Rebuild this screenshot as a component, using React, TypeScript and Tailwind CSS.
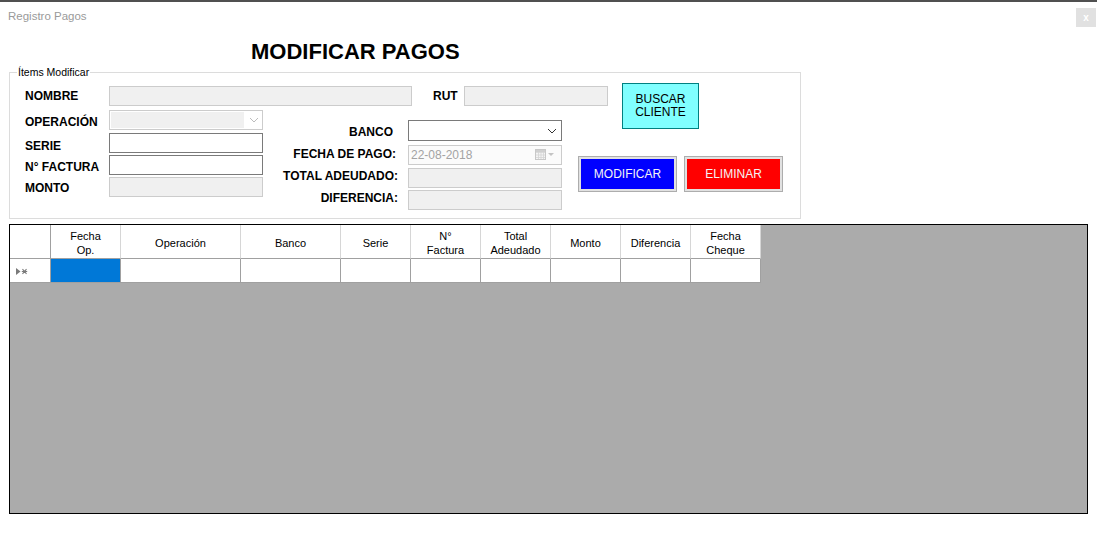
import React from "react";

const font = { fontFamily: '"Liberation Sans", Arial, sans-serif' };

const cols = [
  { label: ["Fecha", "Op."], w: "w-[70px]" },
  { label: ["Operación"], w: "w-[120px]" },
  { label: ["Banco"], w: "w-[100px]" },
  { label: ["Serie"], w: "w-[70px]" },
  { label: ["N°", "Factura"], w: "w-[70px]" },
  { label: ["Total", "Adeudado"], w: "w-[70px]" },
  { label: ["Monto"], w: "w-[70px]" },
  { label: ["Diferencia"], w: "w-[70px]" },
  { label: ["Fecha", "Cheque"], w: "w-[70px]" },
];

function Chevron({ color }: { color: string }) {
  return (
    <svg width="10" height="6" viewBox="0 0 10 6" fill="none">
      <path d="M1 1 L5 5 L9 1" stroke={color} strokeWidth="1" />
    </svg>
  );
}

function Label({ text, className = "" }: { text: string; className?: string }) {
  return (
    <span className={`text-[12px] font-bold leading-[14px] text-black whitespace-nowrap ${className}`}>
      {text}
    </span>
  );
}

function TextBox({ w, disabled }: { w: string; disabled?: boolean }) {
  return disabled ? (
    <div className={`${w} h-[20px] border border-[#cccccc] bg-[#f0f0f0]`} />
  ) : (
    <div className={`${w} h-[20px] border border-[#7a7a7a] bg-white`} />
  );
}

function WinButton({ text, bg }: { text: string; bg: string }) {
  return (
    <div className="w-[99px] h-[36px] border border-[#adadad] bg-[#e1e1e1] p-[2px]">
      <div className={`w-full h-full ${bg} flex items-center justify-center text-[12px] text-[#f4f4f4]`}>
        {text}
      </div>
    </div>
  );
}

export default function App() {
  return (
    <div className="w-[1097px] h-[540px] bg-white overflow-hidden flex flex-col" style={font}>
      {/* window top edge */}
      <div className="h-[2px] bg-[#505050]" />

      {/* title bar */}
      <div className="h-[26px] flex justify-between items-start">
        <span className="pl-[8px] mt-[7px] text-[11.5px] leading-[14px] text-[#9a9a9a]">Registro Pagos</span>
        <div className="mt-[6px] mr-[1px] w-[20px] h-[19px] bg-[#e1e1e1] flex items-center justify-center text-[10px] leading-none text-white font-bold">
          x
        </div>
      </div>

      {/* heading */}
      <h1 className="mt-[13px] pl-[251px] h-[22px] text-[22px] leading-[22px] font-bold text-black">
        MODIFICAR PAGOS
      </h1>

      {/* group box */}
      <div className="relative mt-[9px] ml-[9px] w-[792px] h-[147px] border border-[#dcdcdc] pt-[13px] pl-[15px]">
        <span className="absolute top-[-7px] left-[7px] px-[1px] bg-white text-[10.5px] leading-[13px] text-black">
          Ítems Modificar
        </span>

        {/* row: nombre / rut / buscar */}
        <div className="flex items-start h-[20px]">
          <div className="w-[84px] h-[20px] flex items-center">
            <Label text="NOMBRE" />
          </div>
          <TextBox w="w-[303px]" disabled />
          <div className="ml-[21px] w-[31px] h-[20px] flex items-center">
            <Label text="RUT" />
          </div>
          <TextBox w="w-[144px]" disabled />
          <div className="ml-[14px] mt-[-3px] w-[77px] h-[46px] shrink-0 border border-[#008080] bg-[#80ffff] flex flex-col items-center justify-center text-[12px] leading-[13px] text-black">
            <span>BUSCAR</span>
            <span>CLIENTE</span>
          </div>
        </div>

        <div className="flex items-start mt-[4px]">
          {/* left column */}
          <div className="flex flex-col">
            <div className="flex items-center h-[20px]">
              <div className="w-[84px] pt-[1px]">
                <Label text="OPERACIÓN" />
              </div>
              <div className="w-[154px] h-[20px] border border-[#cccccc] bg-white flex items-center pl-[1px] pr-[3px]">
                <div className="w-[133px] h-[16px] bg-[#f0f0f0]" />
                <div className="ml-auto">
                  <Chevron color="#bcbcbc" />
                </div>
              </div>
            </div>
            <div className="flex items-center h-[20px] mt-[3px]">
              <div className="w-[84px] pt-[3px]">
                <Label text="SERIE" />
              </div>
              <TextBox w="w-[154px]" />
            </div>
            <div className="flex items-center h-[20px] mt-[2px]">
              <div className="w-[84px] pt-[2px]">
                <Label text="N° FACTURA" />
              </div>
              <TextBox w="w-[154px]" />
            </div>
            <div className="flex items-center h-[20px] mt-[2px]">
              <div className="w-[84px]">
                <Label text="MONTO" />
              </div>
              <TextBox w="w-[154px]" disabled />
            </div>
          </div>

          {/* middle column */}
          <div className="flex flex-col mt-[10px]">
            <div className="flex items-center h-[21px]">
              <div className="w-[135px] text-right pr-[5px]">
                <Label text="BANCO" />
              </div>
              <div className="ml-[10px] w-[154px] h-[21px] border border-[#7a7a7a] bg-white flex items-center justify-end pr-[4px]">
                <Chevron color="#333333" />
              </div>
            </div>
            <div className="flex items-center h-[20px] mt-[4px]">
              <div className="w-[135px] text-right pr-[2px] mb-[5px]">
                <Label text="FECHA DE PAGO:" />
              </div>
              <div className="ml-[10px] w-[154px] h-[20px] border border-[#cccccc] bg-[#fbfbfb] flex items-center pl-[2px] pr-[6px]">
                <span className="text-[12px] text-[#a3a3a3] leading-none">22-08-2018</span>
                <svg className="ml-auto" width="20" height="12" viewBox="0 0 20 12">
                  <rect x="0.5" y="0.5" width="10" height="10" fill="#f4f4f4" stroke="#c8c8c8" />
                  <path d="M1 3.5 H10 M1 6 H10 M1 8.5 H10 M3.5 3 V10 M6 3 V10 M8.5 3 V10" stroke="#d4d4d4" strokeWidth="0.8" />
                  <rect x="1" y="1" width="9" height="2" fill="#d0d0d0" />
                  <path d="M13 4 H19 L16 7 Z" fill="#c4c4c4" />
                </svg>
              </div>
            </div>
            <div className="flex items-center h-[20px] mt-[3px]">
              <div className="w-[135px] text-right mb-[7px]">
                <Label text="TOTAL ADEUDADO:" />
              </div>
              <div className="ml-[10px]">
                <TextBox w="w-[154px]" disabled />
              </div>
            </div>
            <div className="flex items-center h-[20px] mt-[2px]">
              <div className="w-[135px] text-right mb-[6px]">
                <Label text="DIFERENCIA:" />
              </div>
              <div className="ml-[10px]">
                <TextBox w="w-[154px]" disabled />
              </div>
            </div>
          </div>

          {/* action buttons */}
          <div className="flex mt-[46px] ml-[16px] gap-[7px]">
            <WinButton text="MODIFICAR" bg="bg-[#0000ff]" />
            <WinButton text="ELIMINAR" bg="bg-[#ff0000]" />
          </div>
        </div>
      </div>

      {/* data grid */}
      <div className="mt-[5px] ml-[9px] w-[1079px] h-[290px] border border-black bg-[#ababab]">
        <div className="flex">
          <div className="w-[41px] h-[34px] bg-white border-r border-b border-[#a0a0a0]" />
          {cols.map((c, i) => (
            <div
              key={i}
              className={`${c.w} h-[34px] bg-white border-r border-r-[#d6d6d6] border-b border-b-[#a0a0a0] flex flex-col items-center justify-center pt-[2px] text-[11px] leading-[14px] text-black`}
            >
              {c.label.map((l) => (
                <span key={l}>{l}</span>
              ))}
            </div>
          ))}
        </div>
        <div className="flex">
          <div className="w-[41px] h-[24px] bg-white border-r border-b border-[#a0a0a0] flex items-center pl-[6px] pt-[2px]">
            <svg width="12" height="7" viewBox="0 0 12 7">
              <path d="M0 0 L4.5 3.5 L0 7 Z" fill="#7a7a7a" />
              <path d="M6.5 1.2 L10.5 5.8 M10.5 1.2 L6.5 5.8 M5.8 3.5 H11.2" stroke="#7a7a7a" strokeWidth="1.1" />
            </svg>
          </div>
          {cols.map((c, i) => (
            <div
              key={i}
              className={`${c.w} h-[24px] border-r border-b border-[#a0a0a0] ${i === 0 ? "bg-[#0078d7]" : "bg-white"}`}
            />
          ))}
        </div>
      </div>
    </div>
  );
}
